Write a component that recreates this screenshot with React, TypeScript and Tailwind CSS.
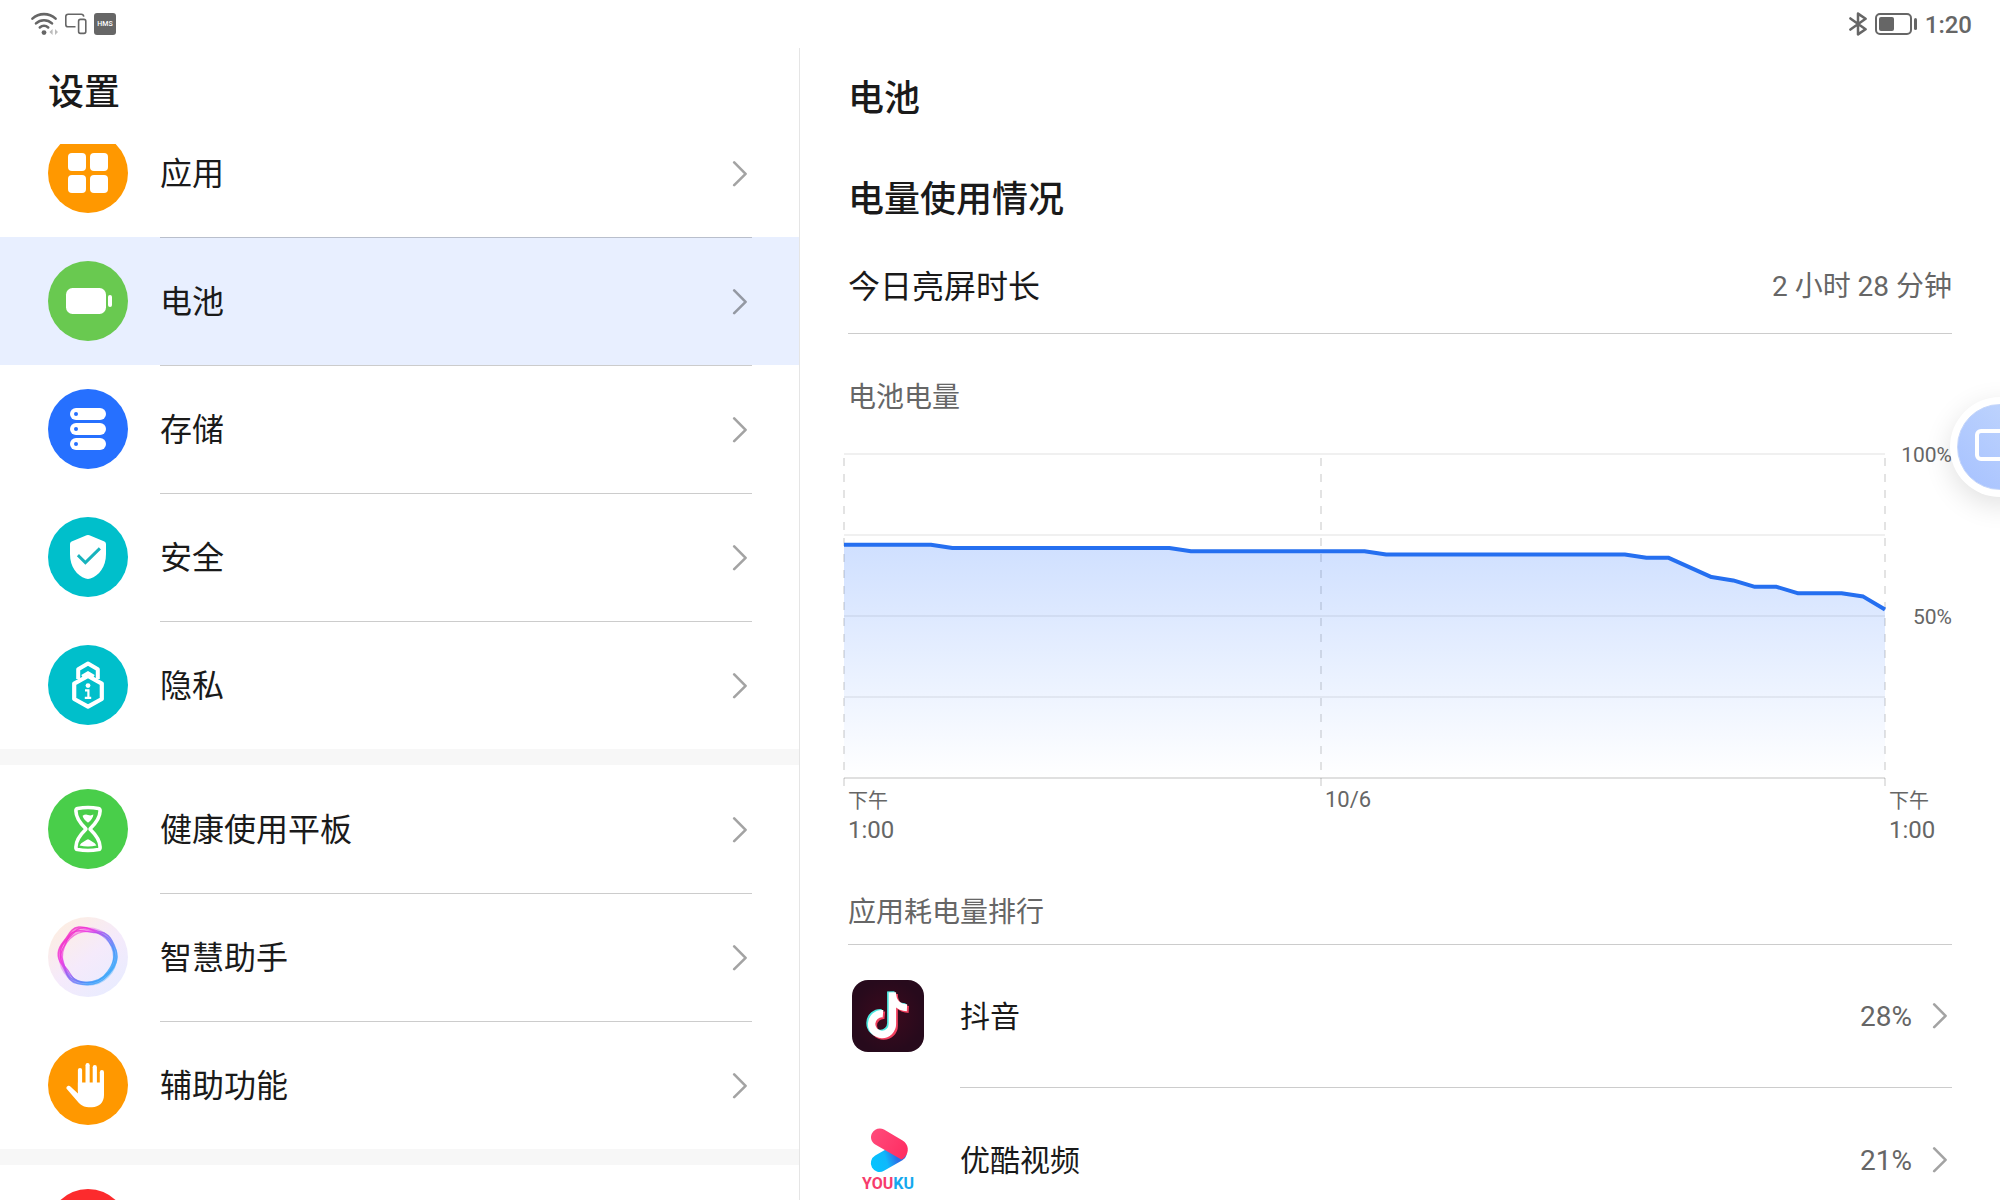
import type { ReactNode } from "react";

function Chevron() {
  return (
    <svg width="16" height="26" viewBox="0 0 16 26" fill="none" className="shrink-0" aria-hidden="true">
      <path d="M2.2 1.4 L13.6 12.8 L2.2 24.2" stroke="#000" strokeOpacity="0.36" strokeWidth="2.6" strokeLinecap="round" strokeLinejoin="round" />
    </svg>
  );
}

function Disc({ fill, children }: { fill: string; children?: ReactNode }) {
  return (
    <svg width="80" height="80" viewBox="0 0 80 80" fill="none" className="shrink-0" aria-hidden="true">
      <circle cx="40" cy="40" r="40" fill={fill} />
      {children}
    </svg>
  );
}

const appsIcon = (
  <Disc fill="#ff9800">
    <g fill="#fff">
      <rect x="20" y="20" width="18" height="18" rx="4" />
      <rect x="42" y="20" width="18" height="18" rx="4" />
      <rect x="20" y="42" width="18" height="18" rx="4" />
      <rect x="42" y="42" width="18" height="18" rx="4" />
    </g>
  </Disc>
);

const batteryIcon = (
  <Disc fill="#69c950">
    <rect x="18" y="27" width="40" height="26" rx="6.5" fill="#fff" />
    <rect x="60" y="34" width="4" height="12" rx="2" fill="#fff" />
  </Disc>
);

const storageIcon = (
  <Disc fill="#2670ff">
    {[19, 34, 49].map((y) => (
      <g key={y}>
        <rect x="22" y={y} width="36" height="12" rx="6" fill="#fff" />
        <circle cx="28" cy={y + 6} r="2" fill="#2670ff" />
      </g>
    ))}
  </Disc>
);

const securityIcon = (
  <Disc fill="#00bfcb">
    <path
      d="M38.6 18.2 Q40 17.6 41.4 18.2 L56.4 24.6 Q58 25.3 58 27 V37 C58 50 51 58.6 42.4 61.6 Q40 62.4 37.6 61.6 C29 58.6 22 50 22 37 V27 Q22 25.3 23.6 24.6 Z"
      fill="#fff"
    />
    <path d="M31 39.2 L37.4 45.6 L50.8 32.4" stroke="#17b3bd" strokeWidth="3" strokeLinecap="square" />
  </Disc>
);

const privacyIcon = (
  <Disc fill="#00bfcb">
    <path d="M30.2 34 V24.2 L40 18.6 L49.8 24.2 V34" stroke="#fff" strokeWidth="4" strokeLinejoin="round" />
    <path d="M34 31.2 L40 27.8 L46 31.2" stroke="#fff" strokeWidth="3" />
    <path d="M40 31 L53.8 38.6 V54 L40 61.6 L26.2 54 V38.6 Z" fill="#00bfcb" stroke="#fff" strokeWidth="4.2" strokeLinejoin="round" />
    <circle cx="40" cy="40.6" r="2.4" fill="#fff" />
    <path d="M37 45.4 H40.4 V52.6 M36.8 52.8 H43.2" stroke="#fff" strokeWidth="2.2" />
  </Disc>
);

const hourglassIcon = (
  <Disc fill="#49ce4a">
    <path
      d="M29.5 19.4 C35 18.4 45 18.4 50.5 19.4 Q52.2 19.8 52.1 22 C52 29 45.5 36.4 42.6 39.2 Q41.8 40 42.6 40.8 C45.5 43.6 52 51 52.1 58 Q52.2 60.2 50.5 60.6 C45 61.6 35 61.6 29.5 60.6 Q27.8 60.2 27.9 58 C28 51 34.5 43.6 37.4 40.8 Q38.2 40 37.4 39.2 C34.5 36.4 28 29 27.9 22 Q27.8 19.8 29.5 19.4 Z"
      stroke="#fff"
      strokeWidth="3.6"
    />
    <path d="M34.6 26.8 Q37.5 24.8 40 26 Q43 27 45.4 25.6 C45.2 28.4 43 31.6 40.6 33.2 Q40 33.6 39.4 33.2 C37 31.6 35 29.4 34.6 26.8 Z" fill="#fff" />
    <path d="M31.6 56.4 C33.4 53.2 37 52.4 38.8 50.8 Q40 49.8 41.2 50.8 C43 52.4 46.6 53.2 48.4 56.4 Q40 58.4 31.6 56.4 Z" fill="#fff" />
  </Disc>
);

const blob =
  "M31 11.5 C38 10.5 47 15.5 53 16.5 C62 18.5 64 27 67 34 C70 43 66 51 58 59 C51 67 40 68 30 66 C20 64 20 56 15 48 C9 40 10 33 17 25 C22 19 23 12.5 31 11.5 Z";

const assistantIcon = (
  <svg width="80" height="80" viewBox="0 0 80 80" fill="none" className="shrink-0" aria-hidden="true">
    <defs>
      <linearGradient id="assistant-bg" x1="0.1" y1="0.1" x2="0.8" y2="1">
        <stop offset="0" stopColor="#fdeee2" />
        <stop offset="0.5" stopColor="#f5eafb" />
        <stop offset="1" stopColor="#e8ecff" />
      </linearGradient>
      <linearGradient id="assistant-ring" x1="12" y1="20" x2="60" y2="62" gradientUnits="userSpaceOnUse">
        <stop offset="0" stopColor="#f425b8" />
        <stop offset="0.28" stopColor="#ee35e4" />
        <stop offset="0.52" stopColor="#8c62f4" />
        <stop offset="0.8" stopColor="#4298fb" />
        <stop offset="1" stopColor="#35aaf8" />
      </linearGradient>
    </defs>
    <circle cx="40" cy="40" r="40" fill="url(#assistant-bg)" />
    <g stroke="url(#assistant-ring)" transform="translate(-1.6 -2) scale(1.04)">
      <path d={blob} strokeWidth="1.4" strokeOpacity="0.7" />
      <path d={blob} strokeWidth="2.4" strokeOpacity="0.5" transform="translate(1.4 1.4) scale(.965)" />
      <path d={blob} strokeWidth="1.4" strokeOpacity="0.7" transform="rotate(10 40 40) translate(2.4 2.4) scale(.94)" />
      <path d={blob} strokeWidth="1.4" strokeOpacity="0.8" transform="rotate(-9 40 40) translate(3.6 3.6) scale(.91)" />
      <circle cx="40" cy="40" r="26.4" strokeWidth="3.6" strokeOpacity="0.35" />
      <circle cx="40" cy="40.4" r="24.6" strokeWidth="1.2" strokeOpacity="0.6" />
    </g>
  </svg>
);

const handIcon = (
  <Disc fill="#ff9800">
    <g stroke="#fff" strokeWidth="4.2" strokeLinecap="round">
      <path d="M32 25 V46" />
      <path d="M39.6 20.2 V44" />
      <path d="M46.8 22.2 V44" />
      <path d="M53.9 27.2 V46" />
    </g>
    <path
      d="M29.9 37.6 H56 V50 C56 57.6 51 62.2 44 62.2 H40.5 C35.6 62.2 32.4 60 29.6 56.6 L18.8 44 C17.4 42.2 20.4 39.6 22.4 41.4 L29.9 48.6 Z"
      fill="#fff"
    />
  </Disc>
);

const redIcon = <Disc fill="#fc2b2d" />;

type Item = { label: string; icon: ReactNode; selected?: boolean };

const groups: Item[][] = [
  [
    { label: "应用", icon: appsIcon },
    { label: "电池", icon: batteryIcon, selected: true },
    { label: "存储", icon: storageIcon },
    { label: "安全", icon: securityIcon },
    { label: "隐私", icon: privacyIcon },
  ],
  [
    { label: "健康使用平板", icon: hourglassIcon },
    { label: "智慧助手", icon: assistantIcon },
    { label: "辅助功能", icon: handIcon },
  ],
  [{ label: "", icon: redIcon }],
];

function SettingsRow({ item, first }: { item: Item; first: boolean }) {
  return (
    <li className={item.selected ? "bg-[#e8efff]" : "bg-white"}>
      <button
        type="button"
        aria-current={item.selected ? "page" : undefined}
        className="flex h-32 w-full items-stretch gap-8 pr-[47px] pl-12 text-left"
      >
        <span className="flex items-center">{item.icon}</span>
        <span className={`flex flex-1 items-center justify-between border-t pr-1 ${first ? "border-transparent" : "border-black/20"}`}>
          <span className="text-[32px] leading-10">{item.label}</span>
          <Chevron />
        </span>
      </button>
    </li>
  );
}

function StatusBar() {
  return (
    <header className="flex h-12 shrink-0 items-center justify-between pr-7 pl-[30px] text-[#666]">
      <div className="flex items-center gap-[7px]">
        <svg width="28" height="24" viewBox="0 0 28 24" fill="none" aria-label="Wi-Fi">
          <g stroke="#666" strokeWidth="2.6" strokeLinecap="round">
            <path d="M2.4 6.6 C9 .6 19 .6 25.6 6.6" />
            <path d="M6 11.4 C10.6 7.2 17.4 7.2 22 11.4" />
            <path d="M9.8 15.4 C12.2 13.4 15.8 13.4 18.2 15.4" />
          </g>
          <circle cx="14" cy="20.6" r="2.4" fill="#666" />
          <path d="M22.6 17 V23 L19.4 20 Z M25 17 V23 L28 20 Z" fill="#bbb" />
        </svg>
        <svg width="22" height="22" viewBox="0 0 22 22" fill="none" stroke="#666" strokeWidth="1.6" aria-label="多设备">
          <path d="M10.5 13.8 H3.2 Q.8 13.8 .8 11.4 V3.6 Q.8 1.2 3.2 1.2 H16.4 Q18.4 1.2 18.8 3.6" />
          <rect x="13.6" y="6.4" width="7.2" height="14" rx="1.8" />
        </svg>
        <svg width="22" height="22" viewBox="0 0 22 22" aria-label="HMS">
          <rect width="22" height="22" rx="3" fill="#666" />
          <text x="11" y="13.4" textAnchor="middle" fontSize="7" fontWeight="500" fill="#fff" fontFamily="Roboto, sans-serif">
            HMS
          </text>
        </svg>
      </div>
      <div className="flex items-center gap-2">
        <svg width="18" height="24" viewBox="0 0 18 24" fill="none" stroke="#666" strokeWidth="2.5" strokeLinecap="round" strokeLinejoin="round" aria-label="蓝牙">
          <path d="M1.4 6.4 L16.6 17.2 L9 22.4 V1.6 L16.6 6.8 L1.4 17.6" />
        </svg>
        <svg width="42" height="22" viewBox="0 0 42 22" fill="none" aria-label="电量">
          <rect x="1" y="1" width="35" height="20" rx="4" stroke="#666" strokeWidth="2" />
          <rect x="4" y="4" width="15" height="14" rx="2" fill="#666" />
          <rect x="39" y="5" width="3" height="12" rx="1.5" fill="#666" />
        </svg>
        <time className="pt-px text-2xl leading-8 font-medium">1:20</time>
      </div>
    </header>
  );
}

/* Battery level in percent for each half-hour step of the last 24 hours. */
const levels = [
  72, 72, 72, 72, 72, 71, 71, 71, 71, 71, 71, 71, 71, 71, 71, 71, 70, 70, 70, 70, 70, 70, 70, 70, 70, 69, 69, 69, 69, 69,
  69, 69, 69, 69, 69, 69, 69, 68, 68, 65, 62, 61, 59, 59, 57, 57, 57, 56, 52,
];
const W = 1041;
const H = 324;
const curve = levels
  .map((v, i) => `${((i * W) / (levels.length - 1)).toFixed(1)},${(H - (v * H) / 100).toFixed(1)}`)
  .join(" L");

function BatteryChart() {
  return (
    <div className="-ml-1">
      <div className="flex">
        <svg
          viewBox={`0 0 ${W} 332`}
          preserveAspectRatio="none"
          className="block h-[332px] min-w-0 flex-1 overflow-visible"
          role="img"
          aria-label="电池电量"
        >
          <defs>
            <linearGradient id="level-fill" x1="0" y1="91" x2="0" y2={H} gradientUnits="userSpaceOnUse">
              <stop offset="0" stopColor="#2670ff" stopOpacity="0.22" />
              <stop offset="1" stopColor="#2670ff" stopOpacity="0" />
            </linearGradient>
          </defs>
          {[0, 81, 162, 243].map((y) => (
            <path key={y} d={`M0 ${y} H${W}`} stroke="#000" strokeOpacity="0.06" strokeWidth="2" />
          ))}
          <path d={`M0 ${H} H${W}`} stroke="#000" strokeOpacity="0.12" strokeWidth="2" />
          {[0, 477, W].map((x) => (
            <path key={x} d={`M${x} 4 V332`} stroke="#000" strokeOpacity="0.11" strokeWidth="2" strokeDasharray="8 8" />
          ))}
          <path d={`M${curve} V${H} H0 Z`} fill="url(#level-fill)" />
          <path d={`M${curve}`} fill="none" stroke="#256ff0" strokeWidth="4" strokeLinejoin="round" vectorEffect="non-scaling-stroke" />
        </svg>
        <div className="-mt-[11px] flex w-[67px] flex-col gap-[138px] text-right text-[21px] leading-6 text-[#666]">
          <span>100%</span>
          <span>50%</span>
        </div>
      </div>
      <div className="grid grid-cols-[477fr_564fr_67px] text-[#666]">
        <TimeLabel />
        <span className="pl-1 text-[22px] leading-7">10/6</span>
        <TimeLabel />
      </div>
    </div>
  );
}

function TimeLabel() {
  return (
    <div className="flex flex-col pt-px pl-1">
      <span className="text-xl leading-7">下午</span>
      <span className="text-2xl leading-[30px]">1:00</span>
    </div>
  );
}

function Note({ color }: { color: string }) {
  return (
    <g stroke={color} strokeWidth="7.4" fill="none">
      <path d="M31 33.7 A10.4 10.4 0 1 0 40.4 44 V12.6" />
      <path d="M40.4 12.6 C40.8 21.6 46.4 27.4 55 27.8" strokeWidth="7" />
    </g>
  );
}

const douyinLogo = (
  <svg width="72" height="72" viewBox="0 0 72 72" className="shrink-0" aria-hidden="true">
    <defs>
      <radialGradient id="douyin-bg">
        <stop offset="0" stopColor="#3d0a1d" />
        <stop offset="1" stopColor="#270a1c" />
      </radialGradient>
    </defs>
    <rect width="72" height="72" rx="16" fill="url(#douyin-bg)" />
    <g transform="translate(-1.6 -1)">
      <Note color="#4be8e0" />
    </g>
    <g transform="translate(1.8 1.6)">
      <Note color="#f0405e" />
    </g>
    <Note color="#fff" />
  </svg>
);

const youkuLogo = (
  <svg width="72" height="72" viewBox="0 0 72 72" fill="none" className="shrink-0" aria-hidden="true">
    <defs>
      <linearGradient id="youku-blue" x1="20" y1="40" x2="50" y2="30" gradientUnits="userSpaceOnUse">
        <stop offset="0" stopColor="#04c3ff" />
        <stop offset="0.45" stopColor="#10b8fb" />
        <stop offset="0.8" stopColor="#2a6fe6" />
      </linearGradient>
      <linearGradient id="youku-pink" x1="20" y1="10" x2="54" y2="32" gradientUnits="userSpaceOnUse">
        <stop offset="0" stopColor="#ff4a7a" />
        <stop offset="1" stopColor="#ff2d62" />
      </linearGradient>
    </defs>
    <path d="M27.6 40.2 L46 29.6" stroke="url(#youku-blue)" strokeWidth="17.6" strokeLinecap="round" />
    <path
      d="M32 6.6 L50.6 17.4 C56.6 21 57.8 29 52.4 34.4 Q51 35.8 49.4 36.6 L23.2 21.4 C19.4 19.2 17.8 14.4 20 10.2 C22.4 5.8 27.8 4.2 32 6.6 Z"
      fill="url(#youku-pink)"
    />
    <text x="36" y="66" textAnchor="middle" fontSize="16" fontWeight="700" fontFamily="Roboto, sans-serif" fill="#f73c6c">
      YOU<tspan fill="#14a8ee">KU</tspan>
    </text>
  </svg>
);

const usage = [
  { name: "抖音", percent: "28%", logo: douyinLogo, border: "border-b border-black/20" },
  { name: "优酷视频", percent: "21%", logo: youkuLogo, border: "" },
];

export default function App() {
  return (
    <div className="relative flex h-screen flex-col overflow-hidden bg-white font-[Roboto,'Noto_Sans_CJK_SC',sans-serif] text-[#1a1a1a]" lang="zh-CN">
      <StatusBar />
      <div className="flex min-h-0 flex-1">
        <nav aria-label="设置" className="flex w-2/5 flex-col border-r border-black/10">
          <h1 className="h-24 shrink-0 pl-12 text-4xl leading-[90px] font-medium">设置</h1>
          <div className="min-h-0 flex-1 overflow-hidden">
            <div className="-mt-[35px] flex flex-col gap-4 bg-[#f7f7f7]">
              {groups.map((group, g) => (
                <ul key={g}>
                  {group.map((item, i) => (
                    <SettingsRow key={i} item={item} first={i === 0} />
                  ))}
                </ul>
              ))}
            </div>
          </div>
        </nav>
        <main className="min-w-0 flex-1 overflow-hidden px-12">
          <h2 className="text-4xl leading-[102px] font-medium">电池</h2>
          <h3 className="mt-5 text-4xl leading-[60px] font-medium">电量使用情况</h3>
          <div className="mt-[10px] flex h-[94px] items-center justify-between border-b border-black/20">
            <span className="text-[32px] leading-10">今日亮屏时长</span>
            <span className="text-[28px] leading-10 text-[#666]">2 小时 28 分钟</span>
          </div>
          <h4 className="mt-[42px] mb-[34px] text-[28px] leading-[44px] text-[#666]">电池电量</h4>
          <BatteryChart />
          <h4 className="mt-9 border-b border-black/20 text-[28px] leading-[63px] text-[#666]">应用耗电量排行</h4>
          <ul>
            {usage.map((app) => (
              <li key={app.name}>
                <button type="button" className="flex h-[143px] w-full items-stretch gap-9 pl-1 text-left">
                  <span className="flex items-center pb-px">{app.logo}</span>
                  <span className={`flex flex-1 items-center pr-1 ${app.border}`}>
                    <span className="flex-1 pt-0.5 text-[30px] leading-10">{app.name}</span>
                    <span className="mr-5 pt-0.5 text-[28px] leading-10 text-[#666]">{app.percent}</span>
                    <Chevron />
                  </span>
                </button>
              </li>
            ))}
          </ul>
        </main>
      </div>
      <button
        type="button"
        aria-label="悬浮导航"
        className="absolute top-[397px] -right-[50px] flex size-[100px] items-center justify-center rounded-full bg-white shadow-[0_8px_28px_rgba(0,0,0,0.12)]"
      >
        <span className="flex size-[86px] items-center justify-center rounded-full border border-[#c5d6fa] bg-linear-to-tr from-[#a6c1ff] to-[#c4d8fc] pb-1">
          <span className="h-8 w-[50px] rounded-md border-4 border-white" />
        </span>
      </button>
    </div>
  );
}
